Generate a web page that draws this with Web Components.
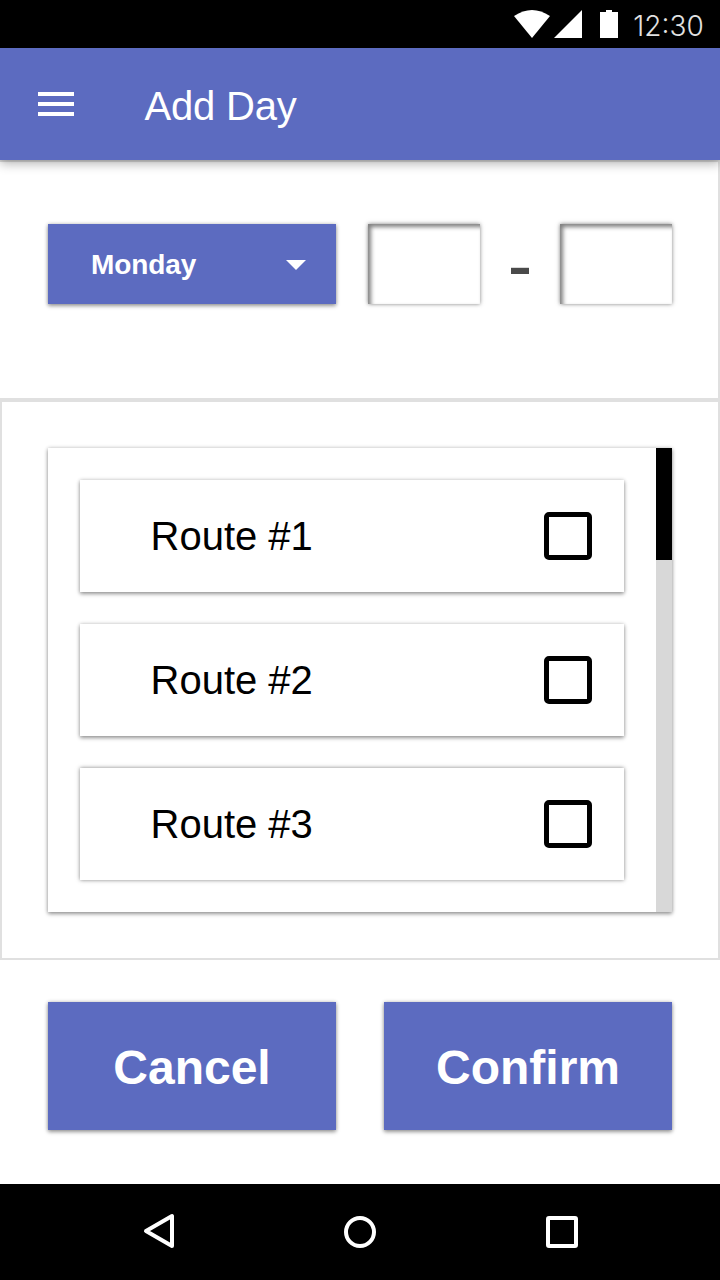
<!DOCTYPE html>
<html lang="en">
<head>
<meta charset="utf-8">
<title>Add Day</title>
<style>
  html, body { margin: 0; height: 100%; background: #fff; overflow: hidden; }
  body { font-family: "Liberation Sans", Helvetica, Arial, sans-serif; color: #000; }
</style>
</head>
<body>
<add-day-page></add-day-page>
<script>
const define = (name, html) => {
  const t = document.createElement('template');
  t.innerHTML = html;
  customElements.define(name, class extends HTMLElement {
    constructor() {
      super();
      this.attachShadow({ mode: 'open' }).append(t.content.cloneNode(true));
    }
  });
};

define('status-bar', `
<style>
  :host { display: flex; box-sizing: border-box; height: 48px; background: #000; justify-content: flex-end; align-items: flex-start; padding-right: 15px; }
  svg { display: block; width: 122px; height: 48px; }
  span { font: 350 28px/32px Inter, Roboto, sans-serif; color: #e2e2e2; width: 73px; padding-top: 10px; white-space: nowrap; letter-spacing: 0; text-align: center; }
</style>
<svg viewBox="510 0 122 48" fill="#fff">
  <path d="M514 16Q532 4 550 16L532 38Z"/>
  <path d="M554 38L582 10V38Z"/>
  <path d="M600 12H606V10H612V12H618V38H600Z"/>
</svg>
<span>12:30</span>`);

define('app-bar', `
<style>
  :host { display: flex; position: relative; z-index: 1; box-sizing: border-box; height: 112px; padding: 0 38px; align-items: center; background: #5c6bc0; color: #fff; box-shadow: 0 4px 10px rgba(0,0,0,.28), 0 0 4px rgba(0,0,0,.16); }
  svg { display: block; width: 36px; height: 24px; margin-right: 70.5px; }
  h1 { margin: 3px 0 0; font-size: 40px; line-height: 46px; font-weight: 400; letter-spacing: -.2px; }
</style>
<svg viewBox="0 0 36 24" fill="#fff"><path d="M0 0H36V4H0ZM0 10H36V14H0ZM0 20H36V24H0Z"/></svg>
<h1><slot></slot></h1>`);

define('day-select', `
<style>
  :host { display: flex; box-sizing: border-box; width: 288px; height: 80px; padding: 0 30px 0 43px; align-items: center; justify-content: space-between; background: #5c6bc0; color: #fff; font-weight: 700; font-size: 28px; line-height: 32px; box-shadow: 0 2px 4px rgba(0,0,0,.36), 0 0 4px rgba(0,0,0,.2); }
  span { padding-top: 2px; letter-spacing: -.1px; }
  svg { display: block; width: 20px; height: 10px; margin-top: 2px; }
</style>
<span><slot></slot></span>
<svg viewBox="0 0 20 10" fill="#fff"><path d="M0 0H20L10 10Z"/></svg>`);

define('time-field', `
<style>
  :host { display: block; width: 112px; height: 80px; background: #fff; box-shadow: inset 3px 3px 4px rgba(0,0,0,.5), 0 0 4px rgba(0,0,0,.5); }
</style>`);

define('route-item', `
<style>
  :host { display: flex; box-sizing: border-box; height: 112px; padding: 0 32px 0 70.5px; align-items: center; justify-content: space-between; background: #fff; font-size: 40px; line-height: 46px; box-shadow: 0 2px 4px rgba(0,0,0,.36), 0 0 4px rgba(0,0,0,.2); }
  :host([flat]) { box-shadow: 0 0 4px rgba(0,0,0,.5); }
  i { display: block; box-sizing: border-box; width: 48px; height: 48px; border: 5px solid #000; border-radius: 5px; }
</style>
<span><slot></slot></span><i></i>`);

define('route-list', `
<style>
  :host { display: flex; height: 464px; background: #fff; box-shadow: 0 2px 4px rgba(0,0,0,.36), 0 0 4px rgba(0,0,0,.2); }
  .items { flex: 1; display: flex; flex-direction: column; gap: 32px; padding: 32px; }
  .track { width: 16px; background: #d8d8d8; }
  .thumb { height: 112px; background: #000; }
</style>
<div class="items"><slot></slot></div>
<div class="track"><div class="thumb"></div></div>`);

define('action-button', `
<style>
  :host { display: flex; box-sizing: border-box; width: 288px; height: 128px; padding-top: 3px; align-items: center; justify-content: center; background: #5c6bc0; color: #fff; font-weight: 700; font-size: 48px; line-height: 54px; box-shadow: 0 2px 4px rgba(0,0,0,.36), 0 0 4px rgba(0,0,0,.2); }
</style>
<span><slot></slot></span>`);

define('nav-bar', `
<style>
  :host { display: block; height: 96px; background: #000; }
  svg { display: block; width: 720px; height: 96px; }
</style>
<svg viewBox="0 1184 720 96" fill="none" stroke="#fff" stroke-width="4" stroke-linejoin="round">
  <path d="M146 1231L172 1216V1246Z"/>
  <circle cx="360" cy="1232" r="14"/>
  <rect x="548" y="1218" width="28" height="28" rx="1"/>
</svg>`);

define('add-day-page', `
<style>
  :host { display: flex; flex-direction: column; width: 720px; height: 1280px; background: #fff; }
  section { box-sizing: border-box; border: 2px solid #e0e0e0; }
  .when { height: 240px; border-left: 0; padding: 62px 46px 0 48px; display: flex; align-items: flex-start; }
  .when day-select { margin-right: 32px; }
  .dash { width: 80px; height: 80px; text-align: center; font-weight: 700; font-size: 52px; line-height: 84px; color: #4a4a4a; transform: scaleX(1.36); }
  .routes { height: 560px; padding: 46px; }
  footer { flex: 1; display: flex; gap: 48px; padding: 42px 48px 0; align-items: flex-start; }
</style>
<status-bar></status-bar>
<app-bar>Add Day</app-bar>
<section class="when">
  <day-select>Monday</day-select>
  <time-field></time-field><div class="dash">-</div><time-field></time-field>
</section>
<section class="routes">
  <route-list>
    <route-item>Route #1</route-item>
    <route-item>Route #2</route-item>
    <route-item flat>Route #3</route-item>
  </route-list>
</section>
<footer>
  <action-button>Cancel</action-button>
  <action-button>Confirm</action-button>
</footer>
<nav-bar></nav-bar>`);
</script>
</body>
</html>
